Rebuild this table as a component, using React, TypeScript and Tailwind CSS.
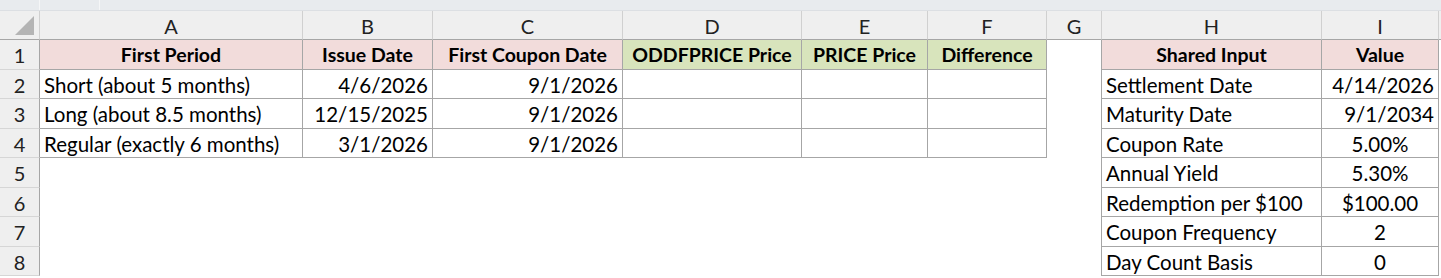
import clsx from 'clsx';

type Fill = 'pink' | 'green' | 'none';

type CellSpec = {
  text?: string;
  align?: 'left' | 'right' | 'center';
  fill?: Fill;
  bold?: boolean;
  boxed?: boolean;
  edgeRight?: boolean;
};

const COLS = 'grid-cols-[40px_263px_130px_190px_179px_126px_119px_55px_220px_117px_1fr]';
const LETTERS = ['A', 'B', 'C', 'D', 'E', 'F', 'G', 'H', 'I'];

const left = [
  ['Short (about 5 months)', '4/6/2026', '9/1/2026'],
  ['Long (about 8.5 months)', '12/15/2025', '9/1/2026'],
  ['Regular (exactly 6 months)', '3/1/2026', '9/1/2026'],
];

const shared: [string, string, 'right' | 'center'][] = [
  ['Settlement Date', '4/14/2026', 'right'],
  ['Maturity Date', '9/1/2034', 'right'],
  ['Coupon Rate', '5.00%', 'center'],
  ['Annual Yield', '5.30%', 'center'],
  ['Redemption per $100', '$100.00', 'center'],
  ['Coupon Frequency', '2', 'center'],
  ['Day Count Basis', '0', 'center'],
];

const Cell = ({ text, align = 'left', fill = 'none', bold, boxed, edgeRight }: CellSpec) => (
  <div
    className={clsx(
      'flex min-h-0 min-w-0 items-center overflow-hidden whitespace-nowrap px-[4px] pt-[1px] leading-[22px] text-black',
      align === 'left' && 'justify-start',
      align === 'right' && 'justify-end',
      align === 'center' && 'justify-center',
      fill === 'pink' && 'bg-[#f2dcdb]',
      fill === 'green' && 'bg-[#d8e4bc]',
      fill === 'none' && 'bg-white',
      bold ? 'text-[19.5px] font-bold' : 'text-[20.5px]',
      (boxed || edgeRight) && 'border-r border-r-[#a6a6a6]',
      boxed && 'border-b border-b-[#a6a6a6]',
    )}
  >
    {text}
  </div>
);

const RowNum = ({ n }: { n: number }) => (
  <div className="flex min-h-0 items-center justify-center border-r border-b border-r-[#a6a6a6] border-b-[#d6d6d6] bg-[#efefef] pt-[1px] text-[20px] leading-[22px] text-[#222]">
    {n}
  </div>
);

export default function App() {
  const rows: CellSpec[][] = [];

  // row 1 - table headers
  rows.push([
    { text: 'First Period', align: 'center', fill: 'pink', bold: true, boxed: true },
    { text: 'Issue Date', align: 'center', fill: 'pink', bold: true, boxed: true },
    { text: 'First Coupon Date', align: 'center', fill: 'pink', bold: true, boxed: true },
    { text: 'ODDFPRICE Price', align: 'center', fill: 'green', bold: true, boxed: true },
    { text: 'PRICE Price', align: 'center', fill: 'green', bold: true, boxed: true },
    { text: 'Difference', align: 'center', fill: 'green', bold: true, boxed: true },
    { edgeRight: true },
    { text: 'Shared Input', align: 'center', fill: 'pink', bold: true, boxed: true },
    { text: 'Value', align: 'center', fill: 'pink', bold: true, boxed: true },
  ]);

  for (let i = 0; i < 7; i++) {
    const l = left[i];
    const [label, value, align] = shared[i];
    const leftCells: CellSpec[] = l
      ? [
          { text: l[0], boxed: true },
          { text: l[1], align: 'right', boxed: true },
          { text: l[2], align: 'right', boxed: true },
          { boxed: true },
          { boxed: true },
          { boxed: true },
        ]
      : [{}, {}, {}, {}, {}, {}];
    rows.push([...leftCells, { edgeRight: true }, { text: label, boxed: true }, { text: value, align, boxed: true }]);
  }

  const heights = ['h-[30px]', 'h-[29px]', 'h-[30px]', 'h-[29px]', 'h-[30px]', 'h-[29px]', 'h-[30px]', 'h-[29px]'];

  return (
    <div className="h-[278px] w-[1441px] overflow-hidden bg-white font-['Lato','Carlito',sans-serif]">
      <div className="flex h-[11px] border-b border-[#dcdfe3] bg-[#e8ebee]">
        <div className="w-[40px] border-r border-[#f5f6f7]" />
        <div className="w-[60px] border-r border-[#f5f6f7]" />
        <div className="flex-1" />
      </div>

      <div className={clsx('grid h-[29px] grid-rows-[100%]', COLS)}>
        <div className="relative border-r border-b border-r-[#d0d0d0] border-b-[#a6a6a6] bg-[#efefef]">
          <svg className="absolute right-[5px] bottom-[4px]" width="19" height="19" viewBox="0 0 19 19">
            <polygon points="19,0 19,19 0,19" fill="#b4b4b4" />
          </svg>
        </div>
        {LETTERS.map((ch) => (
          <div
            key={ch}
            className="flex min-h-0 items-center justify-center border-r border-b border-r-[#d0d0d0] border-b-[#a6a6a6] bg-[#efefef] pt-[1px] text-[20px] leading-[22px] text-[#222]"
          >
            {ch}
          </div>
        ))}
        <div className="border-b border-b-[#a6a6a6] bg-[#efefef]" />
      </div>

      {rows.map((cells, r) => (
        <div key={r} className={clsx('grid grid-rows-[100%]', COLS, heights[r])}>
          <RowNum n={r + 1} />
          {cells.map((c, i) => (
            <Cell key={i} {...c} />
          ))}
          <div className="bg-white" />
        </div>
      ))}
    </div>
  );
}
